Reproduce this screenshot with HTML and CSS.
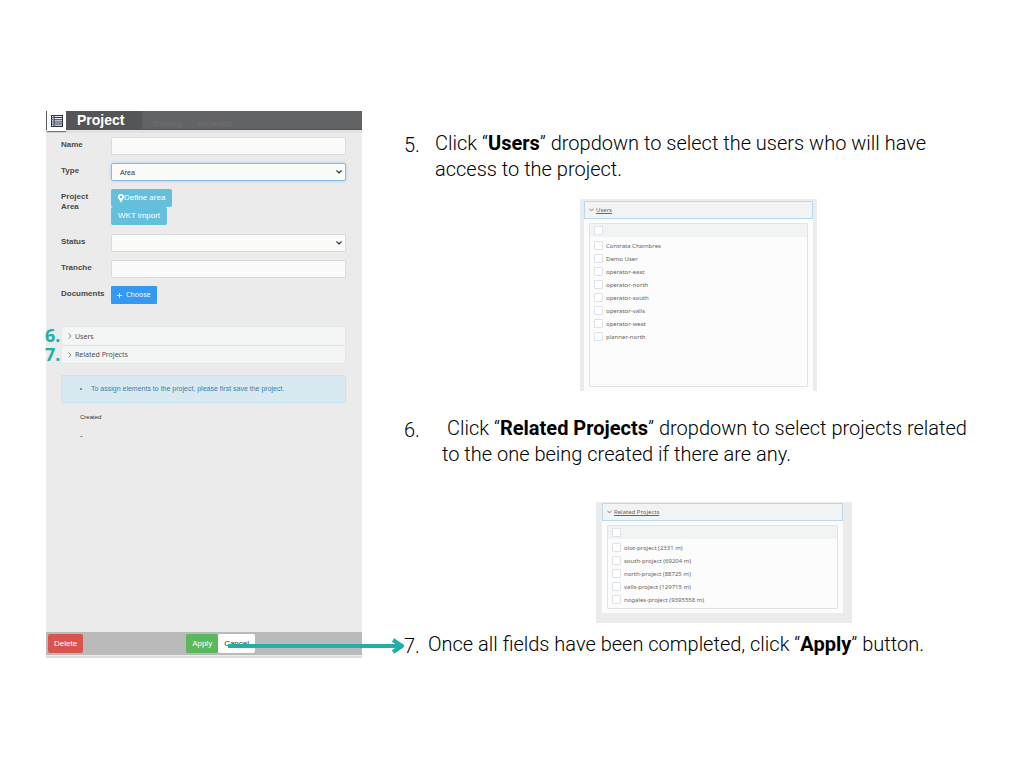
FILE: index.html
```html
<!DOCTYPE html>
<html lang="en">
<head>
<meta charset="utf-8">
<title>Project guide</title>
<link rel="stylesheet" href="styles.css">
</head>
<body>
<main class="guide">
  <section class="panel">
    <header class="panel-head">
      <span class="panel-icon">
        <svg width="12" height="12" viewBox="0 0 12 12"><path d="M0 0h12v12H0z" fill="#2d3440"/><path d="M1 1h1.500v10H1zM3.500 1H11v1H3.500zM3.500 3H11v1.200H3.500zM3.500 5.200H11v1.200H3.500zM3.500 7.400H11v1.200H3.500zM3.500 9.600H11v1.200H3.500z" fill="#e8eefa"/><path d="M1 2h1.500v1H1zM1 4.300h1.500v1H1zM1 6.500h1.500v1H1zM1 8.700h1.500v1H1z" fill="#3c5a8c"/></svg>
      </span>
      <h1 class="panel-title">Project</h1>
      <span class="ghost ghost-strong">Training</span>
      <span class="ghost">olot-project</span>
    </header>
    <form class="form">
      <div class="row"><label class="label" for="name">Name</label><input class="field" id="name" type="text"></div>
      <div class="row"><label class="label" for="type">Type</label>
        <div class="select"><select class="field focus" id="type"><option>Area</option></select><svg class="caret" width="6" height="4" viewBox="0 0 6 4"><path d="M.5.5 3 3 5.500.5"/></svg></div></div>
      <div class="row"><span class="label">Project<br>Area</span>
        <div class="stack">
          <button class="btn info" type="button"><svg width="6" height="9" viewBox="0 0 6 9"><path d="M3 0a3 3 0 0 0-3 3c0 1.800 2 3 3 6 1-3 3-4.200 3-6a3 3 0 0 0-3-3zm0 1.700a1.300 1.300 0 1 1 0 2.600 1.300 1.300 0 0 1 0-2.600z" fill="#fff" fill-rule="evenodd"/></svg>Define area</button>
          <button class="btn info" type="button">WKT import</button>
        </div></div>
      <div class="row"><label class="label" for="status">Status</label>
        <div class="select"><select class="field" id="status"><option></option></select><svg class="caret" width="6" height="4" viewBox="0 0 6 4"><path d="M.5.5 3 3 5.500.5"/></svg></div></div>
      <div class="row"><label class="label" for="tranche">Tranche</label><input class="field" id="tranche" type="text"></div>
      <div class="row"><span class="label">Documents</span><div class="stack"><button class="btn choose" type="button"><svg width="5" height="5" viewBox="0 0 5 5"><path d="M2.500 0v5M0 2.500h5" stroke="#fff" stroke-width=".8"/></svg>Choose</button></div></div>
    </form>
    <div class="accordion">
      <button class="fold" type="button"><svg width="4" height="6" viewBox="0 0 4 6"><path d="M.7.5 3 3 .7 5.500"/></svg>Users<span class="marker">6.</span></button>
      <button class="fold" type="button"><svg width="4" height="6" viewBox="0 0 4 6"><path d="M.7.5 3 3 .7 5.500"/></svg>Related Projects<span class="marker">7.</span></button>
    </div>
    <ul class="alert"><li>To assign elements to the project, please first save the project.</li></ul>
    <dl class="meta"><dt>Created</dt><dd>-</dd></dl>
    <footer class="panel-foot">
      <button class="btn danger" type="button">Delete</button>
      <div class="actions"><button class="btn success" type="button">Apply</button><button class="btn plain" type="button">Cancel</button></div>
      <svg class="arrow" viewBox="0 0 176 16"><path d="M0 8h172M165 2l9 6-9 6" fill="none" stroke="#21b0a8" stroke-width="4" stroke-linejoin="round"/></svg>
    </footer>
  </section>

  <section class="steps">
    <div class="step"><span class="num">5.</span><p class="text">Click “<b>Users</b>” dropdown to select the users who will have<br>access to the project.</p></div>
    <div class="shot shot-users">
      <div class="shot-head"><svg width="5" height="4" viewBox="0 0 5 4"><path d="M.5.700 2.500 3 4.500.700"/></svg><u>Users</u></div>
      <div class="shot-body"><div class="list tall">
        <div class="list-head"><input type="checkbox" class="box" aria-label="Select all users"></div>
        <label class="item"><input type="checkbox" class="box">Contrata Chambres</label>
        <label class="item"><input type="checkbox" class="box">Demo User</label>
        <label class="item"><input type="checkbox" class="box">operator-east</label>
        <label class="item"><input type="checkbox" class="box">operator-north</label>
        <label class="item"><input type="checkbox" class="box">operator-south</label>
        <label class="item"><input type="checkbox" class="box">operator-valls</label>
        <label class="item"><input type="checkbox" class="box">operator-west</label>
        <label class="item"><input type="checkbox" class="box">planner-north</label>
      </div></div>
    </div>
    <div class="step wide"><span class="num">6.</span><p class="text indent">Click “<b>Related Projects</b>” dropdown to select projects related<br>to the one being created if there are any.</p></div>
    <div class="shot shot-projects">
      <div class="shot-head"><svg width="5" height="4" viewBox="0 0 5 4"><path d="M.5.700 2.500 3 4.500.700"/></svg><u>Related Projects</u></div>
      <div class="shot-body"><div class="list">
        <div class="list-head"><input type="checkbox" class="box" aria-label="Select all projects"></div>
        <label class="item"><input type="checkbox" class="box">olot-project (2331 m)</label>
        <label class="item"><input type="checkbox" class="box">south-project (69204 m)</label>
        <label class="item"><input type="checkbox" class="box">north-project (88725 m)</label>
        <label class="item"><input type="checkbox" class="box">valls-project (129715 m)</label>
        <label class="item"><input type="checkbox" class="box">nogales-project (9395558 m)</label>
      </div></div>
    </div>
    <div class="step tight"><span class="num">7.</span><p class="text">Once all fields have been completed, click “<b>Apply</b>” button.</p></div>
  </section>
</main>
</body>
</html>
```
FILE: styles.css
```css
* { box-sizing: border-box; }
body { margin: 0; background: #fff; color: #111; font-family: "Noto Sans", sans-serif; }
h1, p, ul, dl, dd { margin: 0; padding: 0; }
button, input, select { font: inherit; color: inherit; margin: 0; }

.guide { display: grid; grid-template-columns: 316fr 575fr; gap: 42px; padding: 111px 45px 111px 46px; align-items: start; }

.panel { display: flex; flex-direction: column; min-height: 547px; background: #eaebea; border-bottom: 2px solid #dcdedd; font-family: "Liberation Sans", Arial, sans-serif; font-size: 7px; color: #333; }
.panel-head { display: flex; align-items: center; height: 19px; background: linear-gradient(90deg, #545556 30%, #626365 31%); border-bottom: 1px solid #555; box-shadow: 0 3px 0 #e2e2e5; }
.panel-icon { display: grid; place-items: center; align-self: flex-start; width: 19px; height: 20px; margin-left: 1px; background: #fff; box-shadow: 0 1px 1px #777; }
.panel-title { margin-left: 11px; color: #fff; font-size: 14px; line-height: 18px; }
.ghost { margin: 7px 0 0 16px; color: #717274; font-size: 7px; }
.ghost-strong { margin-left: 28px; font-size: 8px; }

.form { display: flex; flex-direction: column; gap: 7px; padding: 7px 16px 0 15px; }
.row { display: grid; grid-template-columns: 50px 1fr; min-height: 19px; }
.label { padding-top: 3px; font-size: 8px; line-height: 10px; font-weight: bold; color: #4a4a4a; }
.field { display: block; width: 100%; height: 18px; padding: 0 8px; appearance: none; background: #fbfcfa; border: 1px solid #dadcdb; border-radius: 1px; }
.focus { border-color: #86bce8; border-radius: 2px; box-shadow: 0 0 3px #9fcdf0; }
.select { position: relative; }
.caret { position: absolute; right: 4px; top: 7px; pointer-events: none; fill: none; stroke: #333; stroke-width: 1.200; }
.stack { display: flex; flex-direction: column; align-items: flex-start; }
.btn { display: flex; align-items: center; justify-content: center; height: 19px; padding: 0 6px; border: 0; border-radius: 2px; font-size: 8px; line-height: 10px; color: #fff; white-space: nowrap; }
.info { height: 18px; padding: 0 7px; background: #63bfdc; }
.row:nth-child(3) { min-height: 38px; }
.choose { gap: 4px; height: 18px; padding: 0 6px; background: #3399f3; font-family: "Noto Sans", sans-serif; font-size: 7px; border-radius: 1px; }

.accordion { display: flex; flex-direction: column; margin: 21px 16px 0 15px; border: 1px solid #e4e8ea; background: #f4f6f5; }
.fold { position: relative; display: flex; align-items: center; gap: 3px; height: 18px; padding: 0 6px; border: 0; background: none; font-family: "Noto Sans", sans-serif; font-size: 7px; color: #495057; }
.fold + .fold { border-top: 1px solid #e1e5e8; }
.fold svg, .shot-head svg { fill: none; stroke: #666; stroke-width: .8; }
.marker { position: absolute; left: -17px; top: 0; color: #21b0a8; font-size: 18px; line-height: 16px; font-weight: bold; }

.alert { margin: 11px 16px 0 15px; padding: 8px 8px 8px 29px; border: 1px solid #c4e6ef; border-radius: 2px; background: #d8e9f1; color: #3b82a8; line-height: 10px; }
.meta { padding: 10px 34px; font-size: 6px; line-height: 9px; }
.meta dd { margin-top: 9px; font-size: 8px; }

.panel-foot { position: relative; display: flex; align-items: flex-start; height: 23px; margin: auto 0 1px; padding: 2px; background: #b9bab9; }
.danger { background: #d9544f; }
.success { background: #5bb85c; }
.plain { background: #fff; color: #333; }
.actions { display: flex; margin-left: 103px; }
.arrow { position: absolute; left: 182px; top: 6px; width: 176px; height: 16px; }

.steps { padding-top: 19px; }
.step { display: flex; gap: 14px; font-family: Roboto, sans-serif; font-size: 20px; line-height: 26px; font-weight: 300; color: #000; white-space: nowrap; }
.step b { font-weight: 700; }
.num { width: 17px; padding-top: 2px; }
.wide { gap: 21px; margin-top: 24px; }
.indent { text-indent: 5px; }
.tight { gap: 7px; margin-top: 8px; }

.shot { padding: 2px 4px 0; background: #ebeceb; color: #666; font-size: 6px; }
.shot-users { width: 237px; margin: 17px 0 0 176px; }
.shot-projects { width: 256px; margin: 35px 0 0 192px; padding: 1px 9px 10px 6px; }
.shot-head { display: flex; align-items: center; gap: 2px; height: 18px; padding: 0 4px; border: 1px solid #b7daf0; background: #f2f4f4; }
.shot-body { padding: 4px 5px; background: #fbfcfb; }
.list { padding-bottom: 2px; border: 1px solid #dfe4e8; border-radius: 1px; }
.tall { min-height: 164px; }
.list-head { display: flex; align-items: center; height: 13px; margin-bottom: 2px; padding-left: 4px; background: #f2f4f4; }
.item { display: flex; align-items: center; gap: 3px; height: 13px; padding-left: 4px; }
.box { appearance: none; width: 9px; height: 9px; border: 1px solid #dde2e6; border-radius: 1px; background: #fff; }
```
